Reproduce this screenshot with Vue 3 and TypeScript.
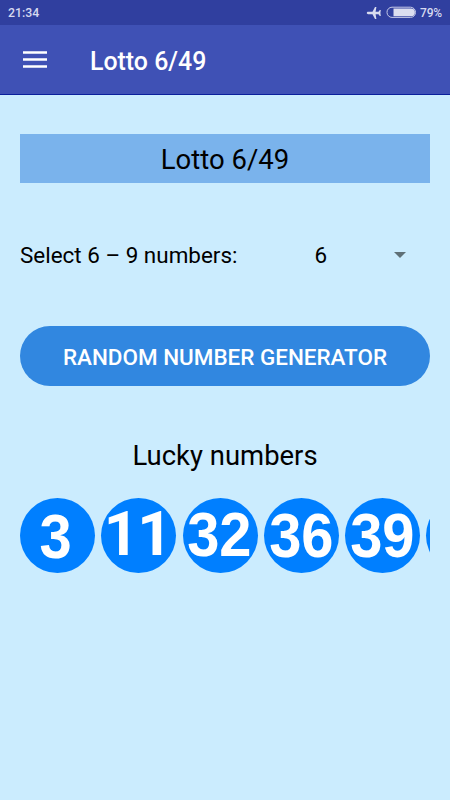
<script setup lang="ts">
interface Ball {
  id: number
  label: string
  offset: string
}

const title = 'Lotto 6/49'
const balls: Ball[] = [
  { id: 1, label: '3', offset: 'low' },
  { id: 2, label: '11', offset: 'ones' },
  { id: 3, label: '32', offset: 'high' },
  { id: 4, label: '36', offset: 'mid' },
  { id: 5, label: '39', offset: 'mid' },
  { id: 6, label: '', offset: 'mid' },
]
</script>

<template>
  <div class="screen">
    <div class="status">
      <span class="clock">21:34</span>
      <svg class="plane" width="16" height="14" viewBox="0 0 16 14">
        <path d="M.8 7c0-.7.6-1.200 1.400-1.200h4.300L9 1h1.400L9.600 5.800h2.900l1.300-1.900h1L14.400 7l.4 3.100h-1l-1.300-1.900H9.600l.8 4.800H9L6.500 8.200H2.200C1.400 8.200.8 7.700.8 7z" fill="#d8dbef" />
      </svg>
      <svg class="battery" width="31" height="13" viewBox="0 0 31 13">
        <rect x="1" y="1.200" width="28.500" height="10.200" rx="5" fill="none" stroke="#c5c9e8" stroke-width="1" />
        <path d="M7.500 2.400h17.500a3.900 3.900 0 0 1 0 7.800H7.500z" fill="#dcdef0" />
      </svg>
      <span class="percent">79%</span>
    </div>
    <header class="bar">
      <svg class="menu" width="24" height="17" viewBox="0 0 24 17">
        <path d="M0 1.500h24M0 8.500h24M0 15.500h24" stroke="#fff" stroke-width="2.600" />
      </svg>
      <h1>{{ title }}</h1>
    </header>
    <main>
      <div class="banner"><span>{{ title }}</span></div>
      <div class="choice">
        <span class="label">Select 6 – 9 numbers:</span>
        <span class="value">6</span>
        <svg class="caret" width="12" height="6" viewBox="0 0 12 6"><path d="M0 0h12L6 6z" fill="#5f7077" /></svg>
      </div>
      <button class="generate"><span>RANDOM NUMBER GENERATOR</span></button>
      <h2><span>Lucky numbers</span></h2>
      <div class="balls">
        <div v-for="ball in balls" :key="ball.id" class="ball" :class="ball.offset">
          <span v-if="ball.label">{{ ball.label }}</span>
        </div>
      </div>
    </main>
  </div>
</template>

<style>
body {
  margin: 0;
}
</style>

<style scoped>
.screen {
  width: 450px;
  height: 800px;
  overflow: hidden;
  background: #cbecfe;
  font-family: Roboto, sans-serif;
  color: #000;
}
.status {
  display: flex;
  align-items: center;
  box-sizing: border-box;
  height: 25px;
  padding: 0 8px;
  background: #303f9f;
  color: #d6d9ef;
  font-weight: 500;
}
.clock {
  font-size: 12.300px;
}
.percent {
  font-size: 12px;
  letter-spacing: -0.200px;
}
.plane {
  margin-left: auto;
  margin-right: 4px;
}
.battery {
  margin-right: 3px;
}
.bar {
  display: flex;
  align-items: center;
  box-sizing: border-box;
  height: 70px;
  padding: 0 23px;
  background: #3f51b5;
  border-bottom: 1px solid #0a1f9c;
}
h1 {
  margin: 5px 0 0 43px;
  color: #fff;
  font-size: 24.900px;
  font-weight: 500;
  line-height: 30px;
}
main {
  padding: 39px 20px 0;
}
.banner {
  display: flex;
  align-items: center;
  justify-content: center;
  height: 49px;
  padding-top: 2px;
  box-sizing: border-box;
  background: #7ab3ec;
  font-size: 27.500px;
}
.choice {
  display: flex;
  align-items: center;
  height: 30px;
  margin-top: 57px;
  font-size: 22.450px;
}
.label {
  width: 294.500px;
}
.value {
  width: 79.500px;
}
.generate {
  display: flex;
  align-items: center;
  justify-content: center;
  width: 100%;
  height: 60px;
  margin: 56px 0 0;
  padding: 2px 0 0;
  border: 0;
  border-radius: 30px;
  background: #3187e0;
  color: #fff;
  font-family: inherit;
  font-size: 22.450px;
  font-weight: 500;
  white-space: nowrap;
}
h2 {
  margin: 53px 0 0;
  font-size: 27.450px;
  font-weight: 400;
  line-height: 34px;
  text-align: center;
}
.balls {
  display: flex;
  gap: 6.300px;
  margin-top: 25px;
  overflow: hidden;
}
.ball {
  display: flex;
  justify-content: center;
  flex: none;
  box-sizing: border-box;
  width: 75px;
  height: 75px;
  border-radius: 50%;
  background: #007fff;
  color: #fff;
  font-family: "Liberation Sans", Arial, sans-serif;
  font-size: 60px;
  font-weight: 700;
  line-height: 75px;
  font-kerning: none;
}
.ball span {
  transform: scale(0.965, 1.04);
}
.low {
  padding-right: 3px;
  line-height: 77px;
}
.mid {
  padding-right: 1px;
}
.high {
  padding-right: 1px;
  line-height: 74px;
}
.ones {
  padding-right: 3px;
  font-family: Roboto, sans-serif;
  font-size: 61px;
  line-height: 73px;
}
.ones span {
  transform: none;
  letter-spacing: -1.400px;
}
</style>
